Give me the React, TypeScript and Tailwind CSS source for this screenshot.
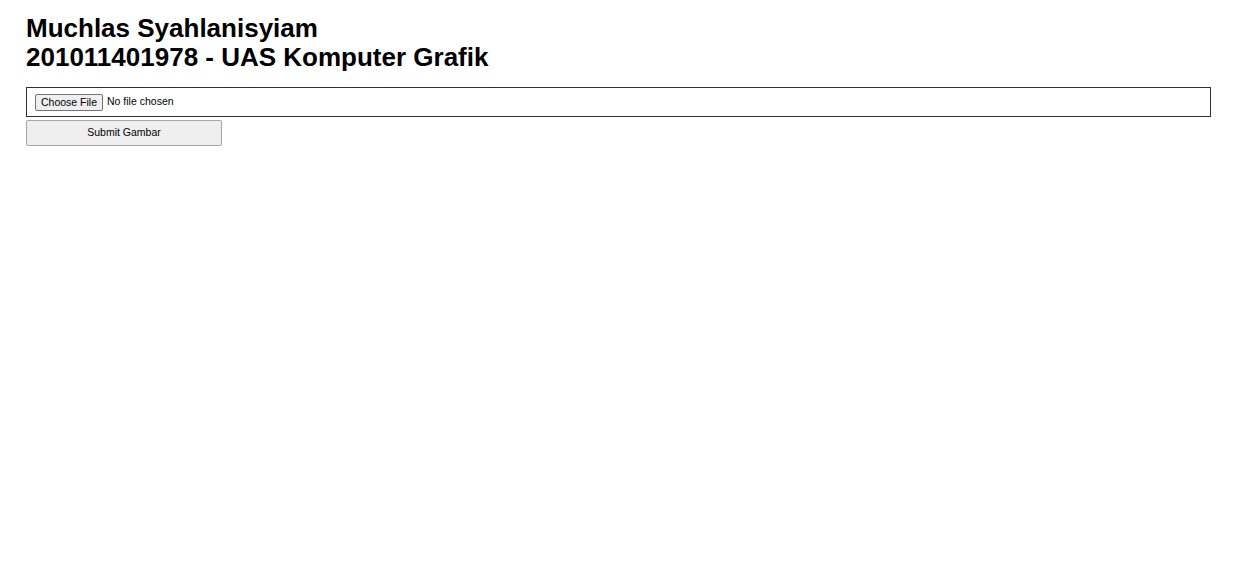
import { useState } from "react";

const App = () => {
  const [fileName, setFileName] = useState<string | null>(null);

  return (
    <div className="min-h-screen bg-white px-[26px] pt-[14px] font-['Liberation_Sans',Arial,sans-serif] text-black">
      <h2 className="text-[26px] font-bold leading-[29px]">
        Muchlas Syahlanisyiam
        <br />
        201011401978 - UAS Komputer Grafik
      </h2>

      <form className="mt-[15px] flex flex-col gap-[3px]" onSubmit={(e) => e.preventDefault()}>
        <label className="flex h-[30px] w-[1185px] cursor-default items-center border border-[#333] pl-[8px] text-[10.5px]">
          <input
            type="file"
            className="hidden"
            onChange={(e) => setFileName(e.target.files?.[0]?.name ?? null)}
          />
          <span className="rounded-[2px] border border-[#767676] bg-[#efefef] px-[5px] py-px leading-[13px] text-black">
            Choose File
          </span>
          <span className="ml-[4px]">{fileName ?? "No file chosen"}</span>
        </label>

        <button
          type="submit"
          className="h-[26px] w-[196px] rounded-[2px] border border-[#a6a6a6] bg-[#efefef] text-[10.5px] text-black"
        >
          Submit Gambar
        </button>
      </form>
    </div>
  );
};

export default App;
